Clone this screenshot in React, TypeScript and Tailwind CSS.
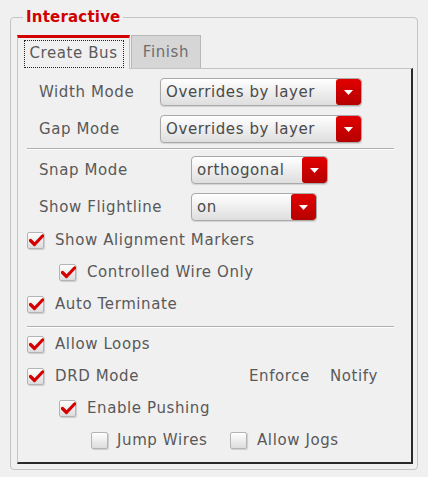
import type { ReactNode } from 'react'

const FONT = "font-['DejaVu_Sans',sans-serif]"

function Check({ checked }: { checked: boolean }) {
  return (
    <span className="relative flex h-[17px] w-[17px] shrink-0 items-center justify-center rounded-[2px] border border-[#b4b4b4] bg-gradient-to-b from-[#ffffff] to-[#dcdcdc] shadow-[1px_1px_1px_rgba(0,0,0,0.15)]">
      {checked && (
        <svg width="15" height="13" viewBox="0 0 15 13" className="absolute left-[1px] top-[1px]">
          <path d="M1.5 6.5 L5.5 10.5 L13.5 2" fill="none" stroke="#d40000" strokeWidth="3.2" strokeLinecap="round" strokeLinejoin="round" />
        </svg>
      )}
    </span>
  )
}

function CheckRow({ label, checked, indent, children }: { label: string; checked: boolean; indent: string; children?: ReactNode }) {
  return (
    <div className={`flex h-[32px] items-center ${indent}`}>
      <Check checked={checked} />
      <span className="ml-[11px]">{label}</span>
      {children}
    </div>
  )
}

function Select({ value, width }: { value: string; width: string }) {
  return (
    <div className={`flex h-[28px] ${width} overflow-hidden rounded-[4px] border border-[#a9a9a9] bg-gradient-to-b from-[#ffffff] to-[#dedede] shadow-[0_1px_1px_rgba(0,0,0,0.12)]`}>
      <span className="flex flex-1 items-center pl-[5px] text-[#4a4a4a]">{value}</span>
      <span className="flex w-[25px] items-center justify-center rounded-[3px] bg-gradient-to-b from-[#e20000] to-[#b50000]">
        <svg width="9" height="5" viewBox="0 0 9 5">
          <path d="M0 0 L9 0 L4.5 5 Z" fill="#ffffff" />
        </svg>
      </span>
    </div>
  )
}

function SelectRow({ label, labelWidth, value, width }: { label: string; labelWidth: string; value: string; width: string }) {
  return (
    <div className="flex h-[28px] items-center pl-[21px]">
      <span className={labelWidth}>{label}</span>
      <Select value={value} width={width} />
    </div>
  )
}

export default function App() {
  return (
    <div className={`h-[477px] w-[428px] bg-[#f0f0f0] pt-[17px] pl-[10px] text-[15px] tracking-[0.6px] text-[#595959] ${FONT}`}>
      <div className="relative h-[453px] w-[408px] rounded-[4px] border border-[#c4c4c4] pt-[17px] pr-[4px] pb-[5px] pl-[6px]">
        <span className="absolute left-[12px] top-[-10px] bg-[#f0f0f0] px-[3px] text-[15px] font-bold leading-[18px] tracking-[0.2px] text-[#d00000]">
          Interactive
        </span>

        <div className="flex h-full flex-col">
          <div className="flex h-[33px] items-end">
            <div className="relative z-10 -mb-px flex h-[34px] w-[113px] items-center justify-center border-x border-[#c4c4c4] border-t-[3px] border-t-[#d40000] bg-[#f0f0f0]">
              <span className="flex h-[28px] w-[100px] items-center justify-center border border-dotted border-[#222] text-[#5a5a5a]">
                Create Bus
              </span>
            </div>
            <div className="ml-px flex h-[33px] w-[70px] items-center justify-center border border-b-0 border-[#b8b8b8] bg-[#d6d6d6] text-[#6e6e6e]">
              Finish
            </div>
          </div>

          <div className="flex flex-1 flex-col border-l border-t border-[#c4c4c4] border-r-[2px] border-b-[2px] border-r-[#2a2a2a] border-b-[#2a2a2a] pt-[9px]">
            <SelectRow label="Width Mode" labelWidth="w-[121px]" value="Overrides by layer" width="w-[202px]" />
            <div className="mt-[9px]">
              <SelectRow label="Gap Mode" labelWidth="w-[121px]" value="Overrides by layer" width="w-[202px]" />
            </div>
            <div className="mx-[9px] mt-[5px] h-[2px] w-[367px] border-t border-[#b0b0b0] border-b border-b-[#ffffff]" />
            <div className="mt-[6px]">
              <SelectRow label="Snap Mode" labelWidth="w-[152px]" value="orthogonal" width="w-[137px]" />
            </div>
            <div className="mt-[9px]">
              <SelectRow label="Show Flightline" labelWidth="w-[152px]" value="on" width="w-[126px]" />
            </div>

            <div className="mt-[3px] flex flex-col">
              <CheckRow label="Show Alignment Markers" checked indent="pl-[9px]" />
              <CheckRow label="Controlled Wire Only" checked indent="pl-[41px]" />
              <CheckRow label="Auto Terminate" checked indent="pl-[9px]" />
            </div>
            <div className="mx-[9px] mt-[6px] h-[2px] w-[367px] border-t border-[#b0b0b0] border-b border-b-[#ffffff]" />
            <div className="flex flex-col">
              <CheckRow label="Allow Loops" checked indent="pl-[9px]" />
              <CheckRow label="DRD Mode" checked indent="pl-[9px]">
                <span className="ml-[110px]">Enforce</span>
                <span className="ml-[20px]">Notify</span>
              </CheckRow>
              <CheckRow label="Enable Pushing" checked indent="pl-[41px]" />
              <div className="flex h-[32px] items-center pl-[73px]">
                <Check checked={false} />
                <span className="ml-[9px] w-[113px]">Jump Wires</span>
                <Check checked={false} />
                <span className="ml-[10px]">Allow Jogs</span>
              </div>
            </div>
          </div>
        </div>
      </div>
    </div>
  )
}
